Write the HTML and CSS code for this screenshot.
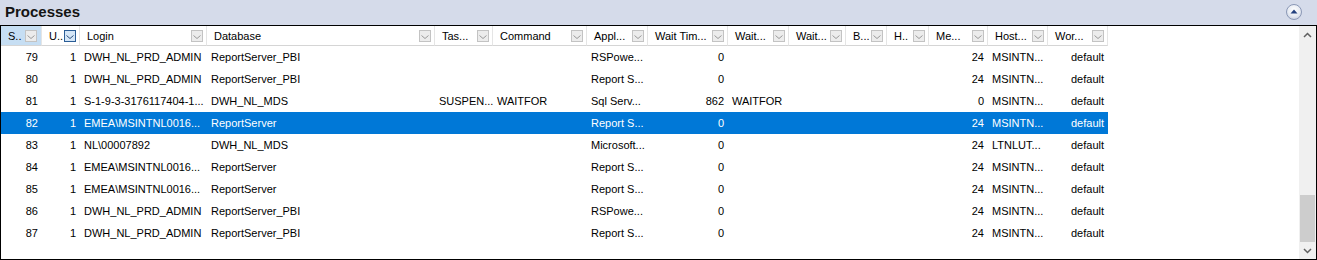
FILE: index.html
```html
<!DOCTYPE html>
<html lang="en">
<head>
  <meta charset="UTF-8" />
  <title>Processes</title>
  <link rel="stylesheet" href="styles.css">
</head>
<body>
  <div class="panel">
    <div class="titlebar">
      <span class="title">Processes</span>
      <span class="collapse">
        <svg width="16" height="16" viewBox="0 0 16 16"><path d="M4.5 9.5 L8 5.5 L11.5 9.5 Z" fill="#23407e"/></svg>
      </span>
    </div>

    <div class="grid">
      <div class="main">
        <div class="row head">
          <div class="hc sorted">S..<i class="flt"></i></div>
          <div class="hc">U..<i class="flt on"></i></div>
          <div class="hc">Login<i class="flt"></i></div>
          <div class="hc">Database<i class="flt"></i></div>
          <div class="hc">Tas...<i class="flt"></i></div>
          <div class="hc">Command<i class="flt"></i></div>
          <div class="hc">Appl...<i class="flt"></i></div>
          <div class="hc">Wait Tim...<i class="flt"></i></div>
          <div class="hc">Wait...<i class="flt"></i></div>
          <div class="hc">Wait...<i class="flt"></i></div>
          <div class="hc">B...<i class="flt"></i></div>
          <div class="hc">H..<i class="flt"></i></div>
          <div class="hc">Me...<i class="flt"></i></div>
          <div class="hc">Host...<i class="flt"></i></div>
          <div class="hc">Wor...<i class="flt"></i></div>
        </div>
        <div id="rows"></div>
      </div>
      <div class="vscroll">
        <span class="arr">
          <svg width="9" height="6" viewBox="0 0 9 6"><path d="M1 5 L4.5 1.5 L8 5" fill="none" stroke="#606060" stroke-width="1.5"/></svg>
        </span>
        <span class="track"><span class="thumb"></span></span>
        <span class="arr">
          <svg width="9" height="6" viewBox="0 0 9 6"><path d="M1 1 L4.5 4.5 L8 1" fill="none" stroke="#606060" stroke-width="1.5"/></svg>
        </span>
      </div>
    </div>
  </div>

  <script>
    const data = [
      ['79', '1', 'DWH_NL_PRD_ADMIN', 'ReportServer_PBI', '', '', 'RSPowe...', '0', '', '', '', '', '24', 'MSINTN...', 'default'],
      ['80', '1', 'DWH_NL_PRD_ADMIN', 'ReportServer_PBI', '', '', 'Report S...', '0', '', '', '', '', '24', 'MSINTN...', 'default'],
      ['81', '1', 'S-1-9-3-3176117404-1...', 'DWH_NL_MDS', 'SUSPEN...', 'WAITFOR', 'Sql Serv...', '862', 'WAITFOR', '', '', '', '0', 'MSINTN...', 'default'],
      ['82', '1', 'EMEA\\MSINTNL0016...', 'ReportServer', '', '', 'Report S...', '0', '', '', '', '', '24', 'MSINTN...', 'default'],
      ['83', '1', 'NL\\00007892', 'DWH_NL_MDS', '', '', 'Microsoft...', '0', '', '', '', '', '24', 'LTNLUT...', 'default'],
      ['84', '1', 'EMEA\\MSINTNL0016...', 'ReportServer', '', '', 'Report S...', '0', '', '', '', '', '24', 'MSINTN...', 'default'],
      ['85', '1', 'EMEA\\MSINTNL0016...', 'ReportServer', '', '', 'Report S...', '0', '', '', '', '', '24', 'MSINTN...', 'default'],
      ['86', '1', 'DWH_NL_PRD_ADMIN', 'ReportServer_PBI', '', '', 'RSPowe...', '0', '', '', '', '', '24', 'MSINTN...', 'default'],
      ['87', '1', 'DWH_NL_PRD_ADMIN', 'ReportServer_PBI', '', '', 'Report S...', '0', '', '', '', '', '24', 'MSINTN...', 'default']
    ];
    // numeric columns are right aligned
    const right = [0, 1, 7, 12, 14];
    const rows = document.getElementById('rows');

    data.forEach(rec => {
      const row = document.createElement('div');
      row.className = 'row' + (rec[0] === '82' ? ' selected' : '');
      rec.forEach((val, i) => {
        const cell = document.createElement('div');
        cell.className = 'c' + (right.includes(i) ? ' r' : '');
        cell.textContent = val;
        row.appendChild(cell);
      });
      rows.appendChild(row);
    });
  </script>
</body>
</html>
```

FILE: styles.css
```css
body {
  margin: 0;
  font-family: "Liberation Sans", Arial, sans-serif;
  font-size: 11px;
  color: #000;
  background: #fff;
}
.panel {
  width: 1317px;
  height: 260px;
  display: flex;
  flex-direction: column;
}
.titlebar {
  height: 25px;
  background: #d5dbea;
  display: flex;
  align-items: center;
  justify-content: space-between;
  padding: 0 15px 2px 5px;
  box-sizing: border-box;
}
.title {
  font-size: 15px;
  font-weight: bold;
  color: #141414;
}
.collapse {
  width: 16px;
  height: 16px;
  border-radius: 50%;
  border: 1px solid #8b98b6;
  background: radial-gradient(circle at 50% 35%, #ffffff 0%, #e6eaf2 55%, #b9c3d8 100%);
  display: flex;
  box-sizing: border-box;
  margin-top: 1px;
}
.collapse svg {
  margin: -1px;
}
.grid {
  flex: 1;
  border: 1px solid #000;
  display: flex;
  min-height: 0;
}
.main {
  flex: 1;
}
.row {
  display: grid;
  grid-template-columns: 41px 38px 127px 228px 58px 94px 61px 80px 61px 57px 41px 42px 59px 60px 60px;
  width: max-content;
  height: 22px;
  align-items: center;
}
.row.head {
  height: 20px;
  align-items: stretch;
}
.hc {
  display: flex;
  align-items: center;
  justify-content: space-between;
  padding: 0 3px 0 7px;
  border-right: 1px solid #e5e5e5;
  border-bottom: 1px solid #d5d5d5;
  white-space: nowrap;
  overflow: hidden;
}
.hc.sorted {
  background: #c6def3;
  padding-right: 4px;
}
.flt {
  width: 12px;
  height: 12px;
  flex: none;
  box-sizing: border-box;
  border: 1px solid #c3c3c3;
  background: #ececec url("data:image/svg+xml,%3Csvg xmlns='http://www.w3.org/2000/svg' width='10' height='10'%3E%3Cpath d='M1.5 4.5 L5 7.5 L8.5 4.5' fill='none' stroke='%239a9a9a' stroke-width='1'/%3E%3C/svg%3E") center no-repeat;
}
.flt.on {
  border-color: #2a5d96;
  background-color: #d4e6f7;
  background-image: url("data:image/svg+xml,%3Csvg xmlns='http://www.w3.org/2000/svg' width='10' height='10'%3E%3Cpath d='M1.5 4.5 L5 7.5 L8.5 4.5' fill='none' stroke='%232c4f7c' stroke-width='1'/%3E%3C/svg%3E");
}
.c {
  padding: 0 4px;
  white-space: nowrap;
  overflow: hidden;
}
.c.r {
  text-align: right;
}
.row.selected {
  background: #0078d7;
  color: #fff;
}
.vscroll {
  width: 17px;
  background: #f0f0f0;
  display: flex;
  flex-direction: column;
}
.arr {
  height: 17px;
  display: flex;
  align-items: center;
  justify-content: center;
}
.track {
  flex: 1;
  display: flex;
  flex-direction: column;
  justify-content: flex-end;
  padding: 0 1px;
}
.thumb {
  height: 47px;
  background: #cdcdcd;
}
```
